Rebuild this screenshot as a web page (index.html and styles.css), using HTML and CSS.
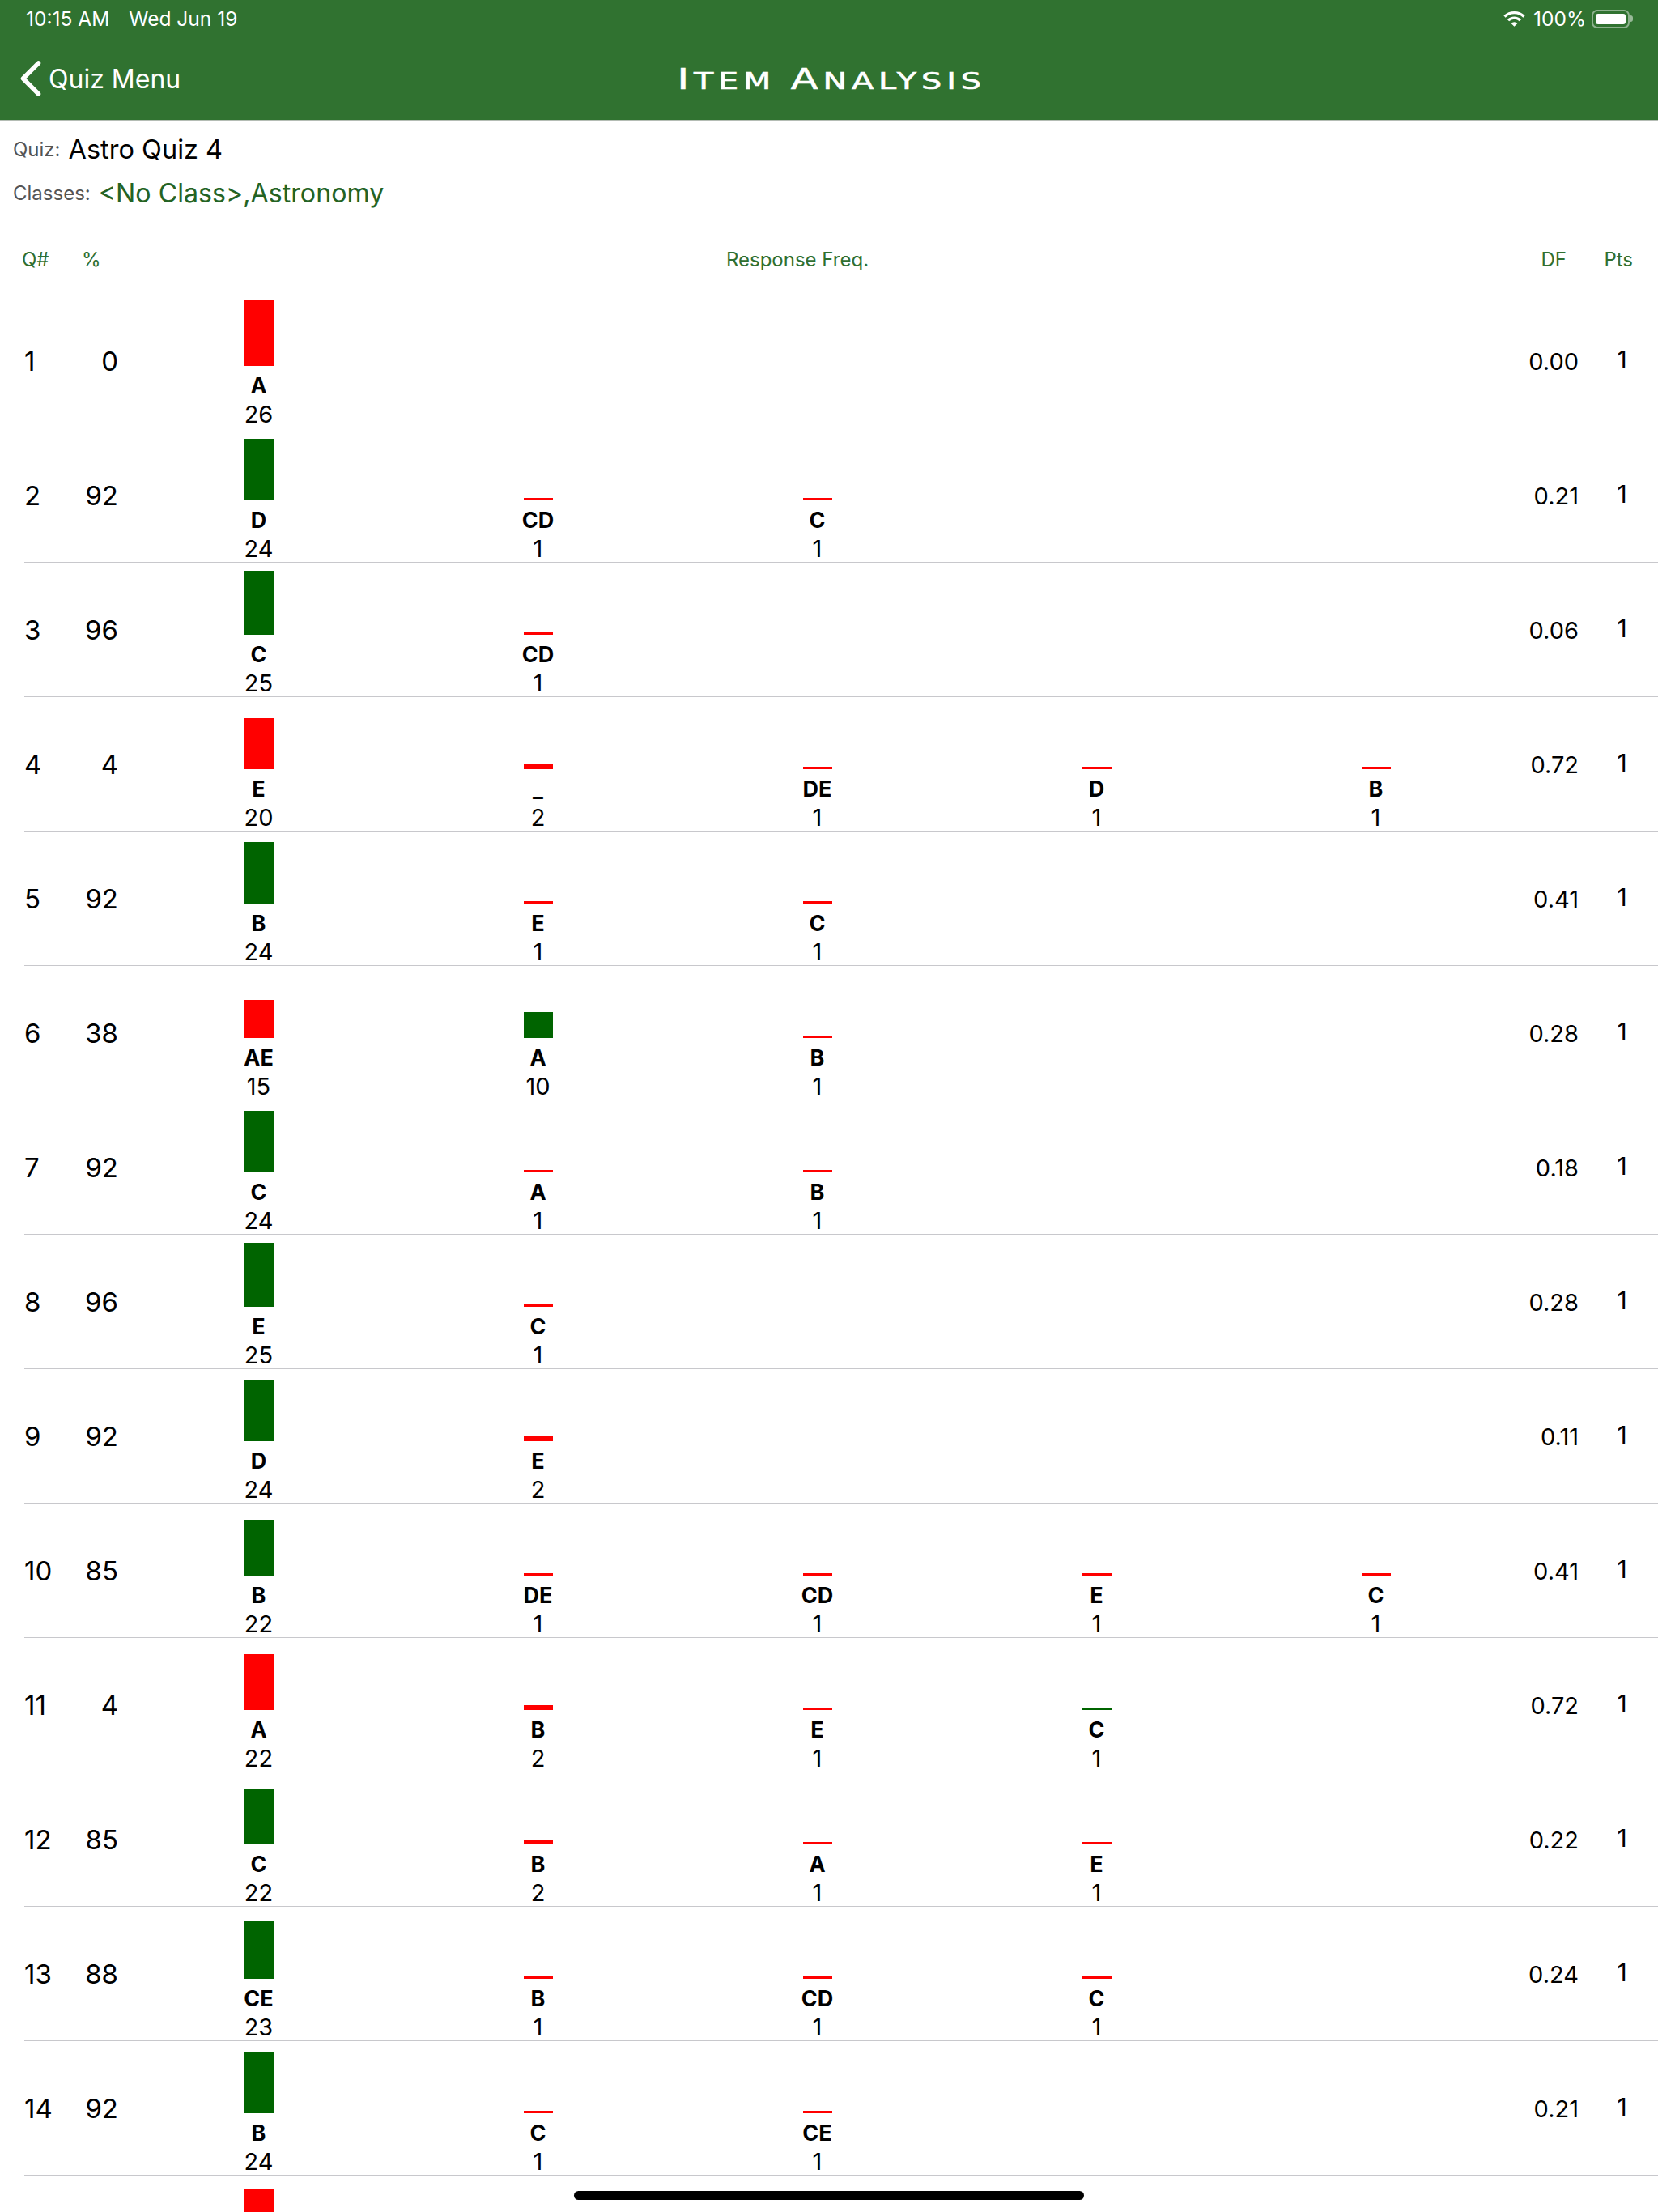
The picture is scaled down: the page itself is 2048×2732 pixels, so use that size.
FILE: index.html
```html
<!DOCTYPE html>
<html lang="en">
<head>
  <meta charset="UTF-8" />
  <meta name="viewport" content="width=device-width, initial-scale=1.0"/>
  <title>Item Analysis</title>
  <link rel="stylesheet" href="styles.css">
</head>
<body>

<div class="screen">
  <header class="topbar">
    <div class="status">
      <div class="status-left"><span>10:15 AM</span><span>Wed Jun 19</span></div>
      <div class="status-right">
        <svg class="wifi" width="27" height="20" viewBox="0 0 27 20">
          <path d="M1.5 7.5A17 17 0 0 1 25.5 7.5" fill="none" stroke="#fff" stroke-width="3.2"/>
          <path d="M6 12.2A10.6 10.6 0 0 1 21 12.2" fill="none" stroke="#fff" stroke-width="3.2"/>
          <path d="M13.5 19.8L9.6 15.9A5.5 5.5 0 0 1 17.4 15.9Z" fill="#fff"/>
        </svg>
        <span>100%</span>
        <div class="battery"><div class="battery-body"><div class="battery-fill"></div></div><div class="battery-nub"></div></div>
      </div>
    </div>
    <nav class="navbar">
      <div class="back">
        <svg width="26" height="44" viewBox="0 0 26 44">
          <path d="M22.5 3L3.5 22L22.5 41" fill="none" stroke="#fff" stroke-width="5.5" stroke-linecap="round" stroke-linejoin="round"/>
        </svg>
        <span>Quiz Menu</span>
      </div>
      <div class="title"><span class="cap">I</span>tem <span class="cap">A</span>nalysis</div>
    </nav>
  </header>

  <section class="info">
    <div class="info-row"><span class="info-label">Quiz:</span><span class="quiz-name">Astro Quiz 4</span></div>
    <div class="info-row"><span class="info-label">Classes:</span><span class="class-names">&lt;No Class&gt;,Astronomy</span></div>
  </section>

  <div class="col-heads">
    <span>Q#</span>
    <span>%</span>
    <span class="head-freq">Response Freq.</span>
    <span class="head-num">DF</span>
    <span class="head-num">Pts</span>
  </div>

  <div class="row">
    <div class="q">1</div><div class="pct">0</div>
    <div class="freqs">
      <div class="freq"><div class="bar-area"><div class="bar red" style="height:81px"></div></div><div class="letter">A</div><div class="count">26</div></div>
    </div>
    <div class="df">0.00</div><div class="pts">1</div>
  </div>

  <div class="row">
    <div class="q">2</div><div class="pct">92</div>
    <div class="freqs">
      <div class="freq"><div class="bar-area"><div class="bar green" style="height:76px"></div></div><div class="letter">D</div><div class="count">24</div></div>
      <div class="freq"><div class="bar-area"><div class="bar red" style="height:3px"></div></div><div class="letter">CD</div><div class="count">1</div></div>
      <div class="freq"><div class="bar-area"><div class="bar red" style="height:3px"></div></div><div class="letter">C</div><div class="count">1</div></div>
    </div>
    <div class="df">0.21</div><div class="pts">1</div>
  </div>

  <div class="row">
    <div class="q">3</div><div class="pct">96</div>
    <div class="freqs">
      <div class="freq"><div class="bar-area"><div class="bar green" style="height:79px"></div></div><div class="letter">C</div><div class="count">25</div></div>
      <div class="freq"><div class="bar-area"><div class="bar red" style="height:3px"></div></div><div class="letter">CD</div><div class="count">1</div></div>
    </div>
    <div class="df">0.06</div><div class="pts">1</div>
  </div>

  <div class="row">
    <div class="q">4</div><div class="pct">4</div>
    <div class="freqs">
      <div class="freq"><div class="bar-area"><div class="bar red" style="height:63px"></div></div><div class="letter">E</div><div class="count">20</div></div>
      <div class="freq"><div class="bar-area"><div class="bar red" style="height:6px"></div></div><div class="letter">_</div><div class="count">2</div></div>
      <div class="freq"><div class="bar-area"><div class="bar red" style="height:3px"></div></div><div class="letter">DE</div><div class="count">1</div></div>
      <div class="freq"><div class="bar-area"><div class="bar red" style="height:3px"></div></div><div class="letter">D</div><div class="count">1</div></div>
      <div class="freq"><div class="bar-area"><div class="bar red" style="height:3px"></div></div><div class="letter">B</div><div class="count">1</div></div>
    </div>
    <div class="df">0.72</div><div class="pts">1</div>
  </div>

  <div class="row">
    <div class="q">5</div><div class="pct">92</div>
    <div class="freqs">
      <div class="freq"><div class="bar-area"><div class="bar green" style="height:76px"></div></div><div class="letter">B</div><div class="count">24</div></div>
      <div class="freq"><div class="bar-area"><div class="bar red" style="height:3px"></div></div><div class="letter">E</div><div class="count">1</div></div>
      <div class="freq"><div class="bar-area"><div class="bar red" style="height:3px"></div></div><div class="letter">C</div><div class="count">1</div></div>
    </div>
    <div class="df">0.41</div><div class="pts">1</div>
  </div>

  <div class="row">
    <div class="q">6</div><div class="pct">38</div>
    <div class="freqs">
      <div class="freq"><div class="bar-area"><div class="bar red" style="height:47px"></div></div><div class="letter">AE</div><div class="count">15</div></div>
      <div class="freq"><div class="bar-area"><div class="bar green" style="height:32px"></div></div><div class="letter">A</div><div class="count">10</div></div>
      <div class="freq"><div class="bar-area"><div class="bar red" style="height:3px"></div></div><div class="letter">B</div><div class="count">1</div></div>
    </div>
    <div class="df">0.28</div><div class="pts">1</div>
  </div>

  <div class="row">
    <div class="q">7</div><div class="pct">92</div>
    <div class="freqs">
      <div class="freq"><div class="bar-area"><div class="bar green" style="height:76px"></div></div><div class="letter">C</div><div class="count">24</div></div>
      <div class="freq"><div class="bar-area"><div class="bar red" style="height:3px"></div></div><div class="letter">A</div><div class="count">1</div></div>
      <div class="freq"><div class="bar-area"><div class="bar red" style="height:3px"></div></div><div class="letter">B</div><div class="count">1</div></div>
    </div>
    <div class="df">0.18</div><div class="pts">1</div>
  </div>

  <div class="row">
    <div class="q">8</div><div class="pct">96</div>
    <div class="freqs">
      <div class="freq"><div class="bar-area"><div class="bar green" style="height:79px"></div></div><div class="letter">E</div><div class="count">25</div></div>
      <div class="freq"><div class="bar-area"><div class="bar red" style="height:3px"></div></div><div class="letter">C</div><div class="count">1</div></div>
    </div>
    <div class="df">0.28</div><div class="pts">1</div>
  </div>

  <div class="row">
    <div class="q">9</div><div class="pct">92</div>
    <div class="freqs">
      <div class="freq"><div class="bar-area"><div class="bar green" style="height:76px"></div></div><div class="letter">D</div><div class="count">24</div></div>
      <div class="freq"><div class="bar-area"><div class="bar red" style="height:6px"></div></div><div class="letter">E</div><div class="count">2</div></div>
    </div>
    <div class="df">0.11</div><div class="pts">1</div>
  </div>

  <div class="row">
    <div class="q">10</div><div class="pct">85</div>
    <div class="freqs">
      <div class="freq"><div class="bar-area"><div class="bar green" style="height:69px"></div></div><div class="letter">B</div><div class="count">22</div></div>
      <div class="freq"><div class="bar-area"><div class="bar red" style="height:3px"></div></div><div class="letter">DE</div><div class="count">1</div></div>
      <div class="freq"><div class="bar-area"><div class="bar red" style="height:3px"></div></div><div class="letter">CD</div><div class="count">1</div></div>
      <div class="freq"><div class="bar-area"><div class="bar red" style="height:3px"></div></div><div class="letter">E</div><div class="count">1</div></div>
      <div class="freq"><div class="bar-area"><div class="bar red" style="height:3px"></div></div><div class="letter">C</div><div class="count">1</div></div>
    </div>
    <div class="df">0.41</div><div class="pts">1</div>
  </div>

  <div class="row">
    <div class="q">11</div><div class="pct">4</div>
    <div class="freqs">
      <div class="freq"><div class="bar-area"><div class="bar red" style="height:69px"></div></div><div class="letter">A</div><div class="count">22</div></div>
      <div class="freq"><div class="bar-area"><div class="bar red" style="height:6px"></div></div><div class="letter">B</div><div class="count">2</div></div>
      <div class="freq"><div class="bar-area"><div class="bar red" style="height:3px"></div></div><div class="letter">E</div><div class="count">1</div></div>
      <div class="freq"><div class="bar-area"><div class="bar green" style="height:3px"></div></div><div class="letter">C</div><div class="count">1</div></div>
    </div>
    <div class="df">0.72</div><div class="pts">1</div>
  </div>

  <div class="row">
    <div class="q">12</div><div class="pct">85</div>
    <div class="freqs">
      <div class="freq"><div class="bar-area"><div class="bar green" style="height:69px"></div></div><div class="letter">C</div><div class="count">22</div></div>
      <div class="freq"><div class="bar-area"><div class="bar red" style="height:6px"></div></div><div class="letter">B</div><div class="count">2</div></div>
      <div class="freq"><div class="bar-area"><div class="bar red" style="height:3px"></div></div><div class="letter">A</div><div class="count">1</div></div>
      <div class="freq"><div class="bar-area"><div class="bar red" style="height:3px"></div></div><div class="letter">E</div><div class="count">1</div></div>
    </div>
    <div class="df">0.22</div><div class="pts">1</div>
  </div>

  <div class="row">
    <div class="q">13</div><div class="pct">88</div>
    <div class="freqs">
      <div class="freq"><div class="bar-area"><div class="bar green" style="height:72px"></div></div><div class="letter">CE</div><div class="count">23</div></div>
      <div class="freq"><div class="bar-area"><div class="bar red" style="height:3px"></div></div><div class="letter">B</div><div class="count">1</div></div>
      <div class="freq"><div class="bar-area"><div class="bar red" style="height:3px"></div></div><div class="letter">CD</div><div class="count">1</div></div>
      <div class="freq"><div class="bar-area"><div class="bar red" style="height:3px"></div></div><div class="letter">C</div><div class="count">1</div></div>
    </div>
    <div class="df">0.24</div><div class="pts">1</div>
  </div>

  <div class="row">
    <div class="q">14</div><div class="pct">92</div>
    <div class="freqs">
      <div class="freq"><div class="bar-area"><div class="bar green" style="height:76px"></div></div><div class="letter">B</div><div class="count">24</div></div>
      <div class="freq"><div class="bar-area"><div class="bar red" style="height:3px"></div></div><div class="letter">C</div><div class="count">1</div></div>
      <div class="freq"><div class="bar-area"><div class="bar red" style="height:3px"></div></div><div class="letter">CE</div><div class="count">1</div></div>
    </div>
    <div class="df">0.21</div><div class="pts">1</div>
  </div>

  <div class="row">
    <div class="q"></div><div class="pct"></div>
    <div class="freqs">
      <div class="freq"><div class="bar-area"><div class="bar red" style="height:73px"></div></div></div>
    </div>
  </div>

  <div class="home-indicator"></div>
</div>

</body>
</html>
```

FILE: styles.css
```css
* {
  box-sizing: border-box;
}

body {
  margin: 0;
  padding: 0;
  background: #ffffff;
  font-family: Inter, 'Liberation Sans', sans-serif;
  color: #000000;
}

.screen {
  position: relative;
  width: 2048px;
  height: 2732px;
  overflow: hidden;
}

/* top bar */
.topbar {
  height: 149px;
  background: #307230;
  color: #ffffff;
  border-bottom: 1px solid #b4bcb4;
}

.status {
  height: 46px;
  padding: 0 31px 0 32px;
  display: flex;
  justify-content: space-between;
  align-items: center;
  font-size: 24.5px;
}

.status-left {
  display: flex;
  gap: 24px;
}

.status-right {
  display: flex;
  align-items: center;
  gap: 7px;
}

.wifi {
  margin-right: 3px;
}

.battery {
  display: flex;
  align-items: center;
  gap: 1px;
}

.battery-body {
  width: 47px;
  height: 23px;
  padding: 3px;
  border: 2px solid rgba(255, 255, 255, 0.45);
  border-radius: 7px;
}

.battery-fill {
  height: 100%;
  background: #ffffff;
  border-radius: 3px;
}

.battery-nub {
  width: 3px;
  height: 8px;
  background: rgba(255, 255, 255, 0.5);
  border-radius: 0 3px 3px 0;
}

.navbar {
  height: 102px;
  display: grid;
  grid-template-columns: 1fr auto 1fr;
  align-items: center;
}

.back {
  padding-left: 25px;
  display: flex;
  align-items: center;
  gap: 9px;
  font-size: 32px;
}

.title {
  grid-column: 2;
  margin-left: 6px;
  font-family: 'DejaVu Sans', sans-serif;
  font-size: 29px;
  text-transform: uppercase;
  letter-spacing: 4.3px;
  -webkit-text-stroke: 0.6px #ffffff;
  transform: scaleX(1.37);
}

.title .cap {
  font-size: 36px;
}

/* quiz info */
.info {
  padding: 8px 0 0 16px;
}

.info-row {
  height: 54px;
  display: flex;
  align-items: center;
  gap: 10px;
}

.info-label {
  font-size: 24px;
  color: #555555;
}

.quiz-name {
  font-size: 32.5px;
}

.class-names {
  font-size: 32.2px;
  color: #246324;
}

/* column headings */
.col-heads {
  height: 98px;
  padding: 31px 0 19px 27px;
  display: grid;
  grid-template-columns: 74px 61px 1646px 127px 82px;
  align-items: center;
  font-size: 24px;
  color: #2f6f30;
}

.head-freq {
  text-align: center;
}

.head-num {
  text-align: right;
}

/* rows */
.row {
  height: 166px;
  margin-left: 30px;
  display: flex;
  border-bottom: 1px solid #c8c8cc;
}

.q {
  width: 60px;
  padding-top: 63px;
  font-size: 33px;
  line-height: 40px;
}

.pct {
  width: 56px;
  padding-top: 63px;
  font-size: 33px;
  line-height: 40px;
  text-align: right;
}

.freqs {
  width: 1725px;
  margin-left: 1px;
  display: flex;
}

.freq {
  width: 345px;
  display: flex;
  flex-direction: column;
  align-items: center;
}

.bar-area {
  height: 89px;
  display: flex;
  align-items: flex-end;
}

.bar {
  width: 36px;
}

.bar.red {
  background: #ff0000;
}

.bar.green {
  background: #006400;
}

.letter {
  margin-top: 9px;
  height: 32px;
  font-size: 27px;
  font-weight: 700;
  line-height: 32px;
}

.count {
  margin-top: 3px;
  height: 32px;
  font-size: 29px;
  line-height: 32px;
}

.df {
  width: 78px;
  padding-top: 64px;
  font-size: 29px;
  line-height: 40px;
  text-align: right;
}

.pts {
  width: 53px;
  margin-left: 27px;
  padding-top: 61px;
  font-size: 30px;
  line-height: 40px;
  text-align: center;
}

.home-indicator {
  position: absolute;
  left: 709px;
  bottom: 15px;
  width: 630px;
  height: 11px;
  background: #000000;
  border-radius: 6px;
}
```
